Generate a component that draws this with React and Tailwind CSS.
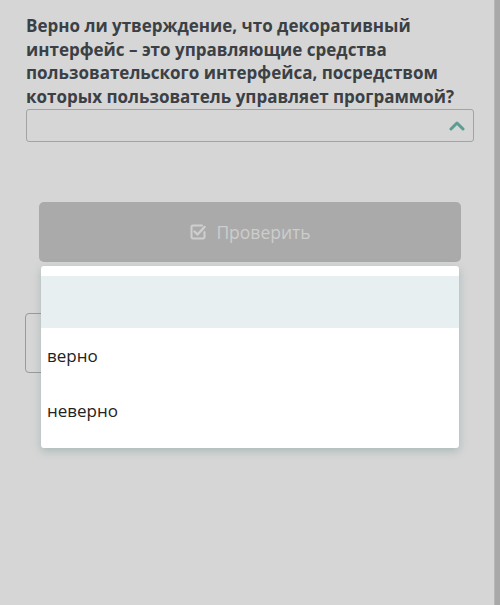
import React from 'react';

const CheckIcon = () => (
    <svg width="18" height="18" viewBox="0 0 18 18" fill="none" className="shrink-0">
        <path d="M13 2.5H4A1.5 1.5 0 0 0 2.5 4v10A1.5 1.5 0 0 0 4 15.5h10a1.5 1.5 0 0 0 1.5-1.5V9" stroke="#cfcfcf" strokeWidth="2" strokeLinecap="round" />
        <path d="M5.5 8.5l3 3 7-7.5" stroke="#cfcfcf" strokeWidth="2.4" strokeLinecap="round" strokeLinejoin="round" />
    </svg>
);

export default function App() {
    return (
        <div className="flex min-h-[605px] w-[500px] bg-[#d6d6d6] font-['Open_Sans',sans-serif]">
            <div className="w-[494px] pl-[26px] pr-[20px] pt-[14px]">
                <h1 className="text-[17px] font-bold leading-[23.5px] text-[#3b4045]">
                    Верно ли утверждение, что декоративный интерфейс – это управляющие средства пользовательского интерфейса, посредством которых пользователь управляет программой?
                </h1>
                <div className="mt-[1px] flex h-[33px] items-center justify-end rounded-[3px] border border-[#a3a3a3] pr-[8px]">
                    <svg width="16" height="10" viewBox="0 0 16 10">
                        <path d="M2 8l6-6 6 6" stroke="#5c9c92" strokeWidth="3" fill="none" strokeLinecap="round" strokeLinejoin="round" />
                    </svg>
                </div>

                <div className="relative mt-[60px] px-[13px]">
                    <button className="flex h-[60px] w-full items-center justify-center gap-[9px] rounded-[5px] bg-[#aaaaaa] text-[17.5px] text-[#cdcdcd]">
                        <CheckIcon />
                        <span>Проверить</span>
                    </button>

                    {/* field mostly hidden behind the open list */}
                    <div className="-ml-[14px] mt-[51px] h-[60px] w-[120px] rounded-[4px] border border-[#9a9a9a]"></div>

                    <div className="absolute left-[15px] right-[15px] top-[64px] h-[182px] overflow-hidden rounded-[3px] bg-white pt-[10px] shadow-[0_3px_8px_rgba(90,130,125,0.35)]">
                        <div className="h-[52px] bg-[#e7eff1]"></div>
                        <div className="flex h-[55px] items-center px-[6px] text-[17px] text-[#222]">верно</div>
                        <div className="flex h-[55px] items-center px-[6px] text-[17px] text-[#222]">неверно</div>
                    </div>
                </div>
            </div>
            <div className="w-[6px] border-l border-[#b8b8b8] bg-[#a9a9a9]"></div>
        </div>
    );
}
